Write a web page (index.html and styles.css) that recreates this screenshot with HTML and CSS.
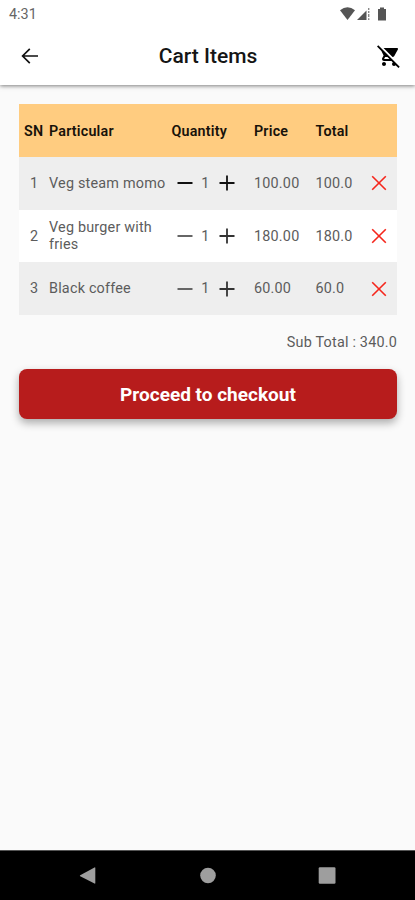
FILE: index.html
```html
<!DOCTYPE html>
<html lang="en">
<head>
<meta charset="utf-8">
<title>Cart Items</title>
<link rel="stylesheet" href="styles.css">
</head>
<body>
<svg class="defs" aria-hidden="true">
  <symbol id="minus" viewBox="0 0 16 16"><path d="M.5 8h15" stroke="currentColor" stroke-width="2"/></symbol>
  <symbol id="plus" viewBox="0 0 16 16"><path d="M.5 8h15M8 .5v15" stroke="currentColor" stroke-width="1.8"/></symbol>
  <symbol id="cross" viewBox="0 0 16 16"><path d="M1.2 1.2l13.6 13.6M14.8 1.2L1.2 14.8" stroke="currentColor" stroke-width="1.6"/></symbol>
</svg>
<header class="top">
  <div class="status">
    <span class="clock">4:31</span>
    <svg class="signals" viewBox="0 0 48 14" fill="#555">
      <path d="M0 3.2Q7.5-2.6 15 3.2L7.5 13z"/>
      <path d="M17 13L26.5 3.5V13z"/>
      <path d="M28 1h1.4v2H28zM28 4h1.4v2H28zM28 7h1.4v3H28zM28 11.3h1.4v1.7H28z" opacity=".7"/>
      <path d="M38 2h2V.5h4V2h2v11.5h-8z"/>
    </svg>
  </div>
  <div class="bar">
    <svg class="back" viewBox="0 0 18 16" fill="none" stroke="#111" stroke-width="1.7"><path d="M17 8H1.8M8.8.8L1.6 8l7.2 7.2"/></svg>
    <h1>Cart Items</h1>
    <svg class="cart" viewBox="0 0 24 24"><path d="M22.73 22.73L2.77 2.77 2 2l-.73-.73L0 2.54l4.39 4.39 2.21 4.66-1.35 2.45c-.16.28-.25.61-.25.96 0 1.1.9 2 2 2h7.46l1.38 1.38c-.5.36-.83.95-.83 1.62 0 1.1.89 2 1.99 2 .67 0 1.26-.33 1.62-.84L21.46 24l1.27-1.27zM7.42 15c-.14 0-.25-.11-.25-.25l.03-.12.9-1.63h2.36l2 2H7.42zm8.13-2c.75 0 1.41-.41 1.75-1.03l3.58-6.49c.08-.14.12-.31.12-.48 0-.55-.45-1-1-1H6.54l9.01 9zM7 18c-1.1 0-1.99.9-1.99 2S5.9 22 7 22s2-.9 2-2-.9-2-2-2z"/></svg>
  </div>
</header>
<main>
  <section class="table">
    <div class="row head"><span>SN</span><span>Particular</span><span>Quantity</span><span>Price</span><span>Total</span></div>
    <div class="row shade">
      <span class="sn">1</span><span class="name">Veg steam momo</span>
      <div class="qty"><svg class="strong"><use href="#minus"/></svg><span>1</span><svg class="strong"><use href="#plus"/></svg></div>
      <span>100.00</span><span>100.0</span><svg class="remove"><use href="#cross"/></svg>
    </div>
    <div class="row">
      <span class="sn">2</span><span class="name">Veg burger with fries</span>
      <div class="qty"><svg><use href="#minus"/></svg><span>1</span><svg class="mid"><use href="#plus"/></svg></div>
      <span>180.00</span><span>180.0</span><svg class="remove"><use href="#cross"/></svg>
    </div>
    <div class="row shade">
      <span class="sn">3</span><span class="name">Black coffee</span>
      <div class="qty"><svg><use href="#minus"/></svg><span>1</span><svg class="mid"><use href="#plus"/></svg></div>
      <span>60.00</span><span>60.0</span><svg class="remove"><use href="#cross"/></svg>
    </div>
  </section>
  <p class="subtotal">Sub Total : 340.0</p>
  <button class="checkout">Proceed to checkout</button>
</main>
<nav>
  <svg viewBox="0 0 18 18"><path d="M1.2 8.2L15.5.4q.8-.3.8.5v15.2q0 .8-.8.4L1.2 9.2q-.7-.5 0-1z"/></svg>
  <svg viewBox="0 0 18 18"><circle cx="9" cy="8.5" r="7.8"/></svg>
  <svg viewBox="0 0 18 18"><rect x=".7" y=".2" width="16.8" height="16.6" rx="1.2"/></svg>
</nav>
</body>
</html>
```
FILE: styles.css
```css
* { box-sizing: border-box; }
body {
  margin: 0;
  height: 900px;
  display: flex;
  flex-direction: column;
  background: #fafafa;
  color: #5c5c5c;
  font: 14.4px/16.5px Roboto, sans-serif;
  letter-spacing: .2px;
}
svg { display: block; }
.defs { position: absolute; width: 0; height: 0; }
.top {
  height: 85px;
  background: #fff;
  box-shadow: 0 1px 4px rgba(0, 0, 0, .5);
}
.status {
  height: 28px;
  padding: 0 27px 0 9px;
  display: flex;
  align-items: center;
  justify-content: space-between;
}
.clock { letter-spacing: 0; color: #666; padding-top: 2px; }
.signals { width: 48px; height: 14px; margin-top: -1px; }
.bar {
  height: 57px;
  padding: 0 14px 0 21px;
  display: grid;
  grid-template-columns: 24px 1fr 24px;
  align-items: center;
}
.back { width: 18px; height: 16px; margin-top: -1px; }
.cart { width: 24px; height: 24px; margin-top: -2px; }
h1 {
  margin: -1px 6px 0 0;
  font-size: 21px;
  line-height: 24px;
  font-weight: 500;
  letter-spacing: 0;
  text-align: center;
  color: #151515;
}
main { flex: 1; padding: 19px 18px 0 19px; }
.row {
  height: 52.8px;
  display: grid;
  grid-template-columns: 25px 122.5px 82.5px 61.5px 55px 16px;
  align-items: center;
  padding-left: 5px;
  background: #fff;
}
.row span { padding-top: 1.6px; }
.head { background: #ffcc80; color: #17120a; font-weight: 600; font-size: 14.3px; }
.shade { background: #eee; }
.row .sn { padding-left: 6px; }
.qty { display: flex; align-items: center; padding-left: 5px; }
.qty svg { width: 16px; height: 16px; color: #666; }
.qty .strong { color: #111; }
.qty .mid { color: #333; }
.qty span { width: 26px; text-align: center; }
.remove { width: 16px; height: 16px; color: #f5261c; }
.subtotal { margin: 20px 0 17.5px; text-align: right; }
.checkout {
  display: block;
  width: 100%;
  height: 50px;
  padding: 2px 0 0;
  border: 0;
  border-radius: 8px;
  background: #b71c1c;
  color: #fff;
  font: 700 19px/22px Roboto, sans-serif;
  box-shadow: 0 4px 8px rgba(0, 0, 0, .32);
}
nav {
  height: 50px;
  background: #000;
  border-top: 1px solid #555;
  display: flex;
  justify-content: space-between;
  padding: 16px 79px 0;
}
nav svg { width: 18px; height: 18px; fill: #9e9e9e; }
```
